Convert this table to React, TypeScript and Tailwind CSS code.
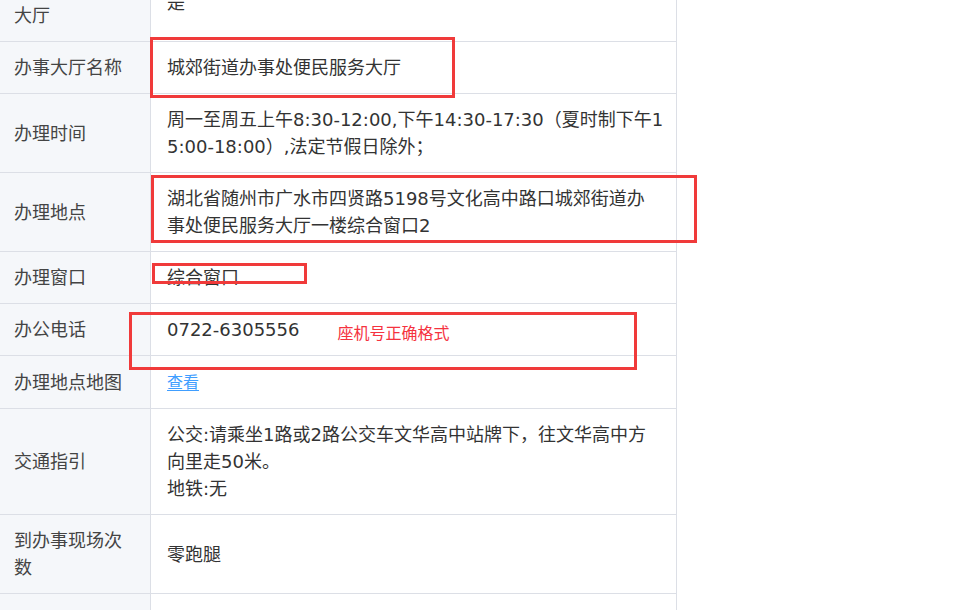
import React from "react";

const rows: { label: React.ReactNode; value: React.ReactNode }[] = [
  { label: "是否进驻政务大厅", value: "是" },
  { label: "办事大厅名称", value: "城郊街道办事处便民服务大厅" },
  {
    label: "办理时间",
    value: (
      <>
        周一至周五上午8:30-12:00,下午14:30-17:30（夏时制下午1
        <br />
        5:00-18:00）,法定节假日除外；
      </>
    ),
  },
  {
    label: "办理地点",
    value: (
      <>
        湖北省随州市广水市四贤路5198号文化高中路口城郊街道办
        <br />
        事处便民服务大厅一楼综合窗口2
      </>
    ),
  },
  { label: "办理窗口", value: "综合窗口" },
  {
    label: "办公电话",
    value: (
      <div className="flex items-start gap-[38px]">
        <span>0722-6305556</span>
        <span className="mt-[8px] text-[16px] leading-[19px] text-[#f5333f]">座机号正确格式</span>
      </div>
    ),
  },
  {
    label: "办理地点地图",
    value: <span className="text-[16px] text-[#409eff] underline underline-offset-2">查看</span>,
  },
  {
    label: "交通指引",
    value: (
      <>
        公交:请乘坐1路或2路公交车文华高中站牌下，往文华高中方
        <br />
        向里走50米。
        <br />
        地铁:无
      </>
    ),
  },
  { label: "到办事现场次数", value: "零跑腿" },
  { label: "", value: "\u00a0" },
];

export default function App() {
  return (
    <div
      className="relative w-[971px] h-[610px] overflow-hidden bg-white text-[18px] leading-[27px] text-[#333]"
      style={{ fontFamily: '"DejaVu Sans", "Noto Sans CJK SC", sans-serif' }}
    >
      <div className="mt-[-37px] w-[677px] border-r border-[#dcdfe6]">
        {rows.map((r, i) => (
          <div key={i} className="flex border-b border-[#dcdfe6]">
            <div className="w-[151px] shrink-0 bg-[#f5f7fa] border-r border-[#dcdfe6] px-[14px] py-[12px] flex items-center text-[#444]">
              <span className="w-[108px] break-all">{r.label}</span>
            </div>
            <div className="flex-1 min-w-0 px-[16px] py-[12px] flex items-center">
              <div className="whitespace-nowrap">{r.value}</div>
            </div>
          </div>
        ))}
      </div>
      {/* annotation boxes drawn over the table */}
      <div className="absolute left-[150px] top-[37px] w-[305px] h-[61px] border-[3px] border-[#f03a3a]" />
      <div className="absolute left-[151px] top-[175px] w-[546px] h-[68px] border-[3px] border-[#f03a3a]" />
      <div className="absolute left-[152px] top-[263px] w-[155px] h-[21px] border-[3px] border-[#f03a3a]" />
      <div className="absolute left-[129px] top-[312px] w-[508px] h-[58px] border-[3px] border-[#f03a3a]" />
    </div>
  );
}
